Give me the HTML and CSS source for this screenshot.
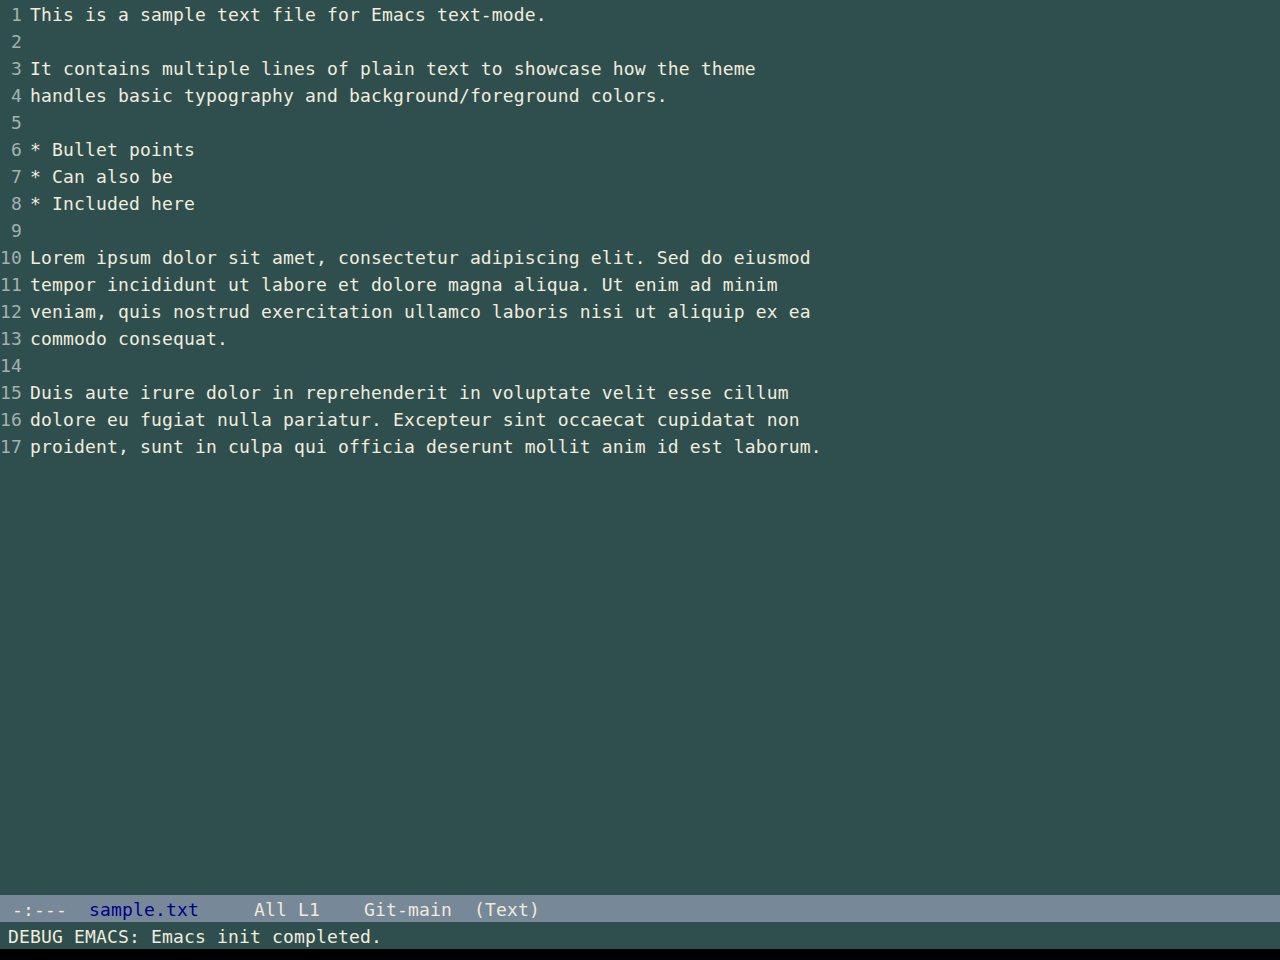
FILE: index.html
```html
<!DOCTYPE html>
<html lang="en">
<head>
  <meta charset="UTF-8" />
  <title>sample.txt - Emacs</title>
  <link rel="stylesheet" href="styles.css">
</head>
<body>

<div class="frame">
  <div class="buffer">
    <div class="line"><span class="num">1</span><span class="text">This is a sample text file for Emacs text-mode.</span></div>
    <div class="line"><span class="num">2</span><span class="text"></span></div>
    <div class="line"><span class="num">3</span><span class="text">It contains multiple lines of plain text to showcase how the theme</span></div>
    <div class="line"><span class="num">4</span><span class="text">handles basic typography and background/foreground colors.</span></div>
    <div class="line"><span class="num">5</span><span class="text"></span></div>
    <div class="line"><span class="num">6</span><span class="text">* Bullet points</span></div>
    <div class="line"><span class="num">7</span><span class="text">* Can also be</span></div>
    <div class="line"><span class="num">8</span><span class="text">* Included here</span></div>
    <div class="line"><span class="num">9</span><span class="text"></span></div>
    <div class="line"><span class="num">10</span><span class="text">Lorem ipsum dolor sit amet, consectetur adipiscing elit. Sed do eiusmod</span></div>
    <div class="line"><span class="num">11</span><span class="text">tempor incididunt ut labore et dolore magna aliqua. Ut enim ad minim</span></div>
    <div class="line"><span class="num">12</span><span class="text">veniam, quis nostrud exercitation ullamco laboris nisi ut aliquip ex ea</span></div>
    <div class="line"><span class="num">13</span><span class="text">commodo consequat.</span></div>
    <div class="line"><span class="num">14</span><span class="text"></span></div>
    <div class="line"><span class="num">15</span><span class="text">Duis aute irure dolor in reprehenderit in voluptate velit esse cillum</span></div>
    <div class="line"><span class="num">16</span><span class="text">dolore eu fugiat nulla pariatur. Excepteur sint occaecat cupidatat non</span></div>
    <div class="line"><span class="num">17</span><span class="text">proident, sunt in culpa qui officia deserunt mollit anim id est laborum.</span></div>
  </div>

  <div class="modeline"> -:---  <span class="bufname">sample.txt</span>     All L1    Git-main  (Text)</div>
  <div class="echo">DEBUG EMACS: Emacs init completed.</div>
</div>

</body>
</html>
```

FILE: styles.css
```css
html, body {
  margin: 0;
  height: 100%;
  background: #000000;
}

.frame {
  display: flex;
  flex-direction: column;
  height: 949px;
  font-family: "DejaVu Sans Mono", monospace;
  font-size: 18px;
  letter-spacing: 0.16px;
  line-height: 29px;
  color: #f2ecdc;
  background: #2f4f4f;
}

.buffer {
  flex: 1;
}

.line {
  display: flex;
  height: 27px;
}

.num {
  width: 22px;
  margin-right: 8px;
  text-align: right;
  color: #a3b1b1;
}

.text {
  white-space: pre;
}

.modeline {
  height: 27px;
  padding-left: 1px;
  white-space: pre;
  background: #778899;
  color: #f0eadc;
}

.bufname {
  color: #00008b;
}

.echo {
  height: 27px;
  padding-left: 8px;
  white-space: pre;
}
```
